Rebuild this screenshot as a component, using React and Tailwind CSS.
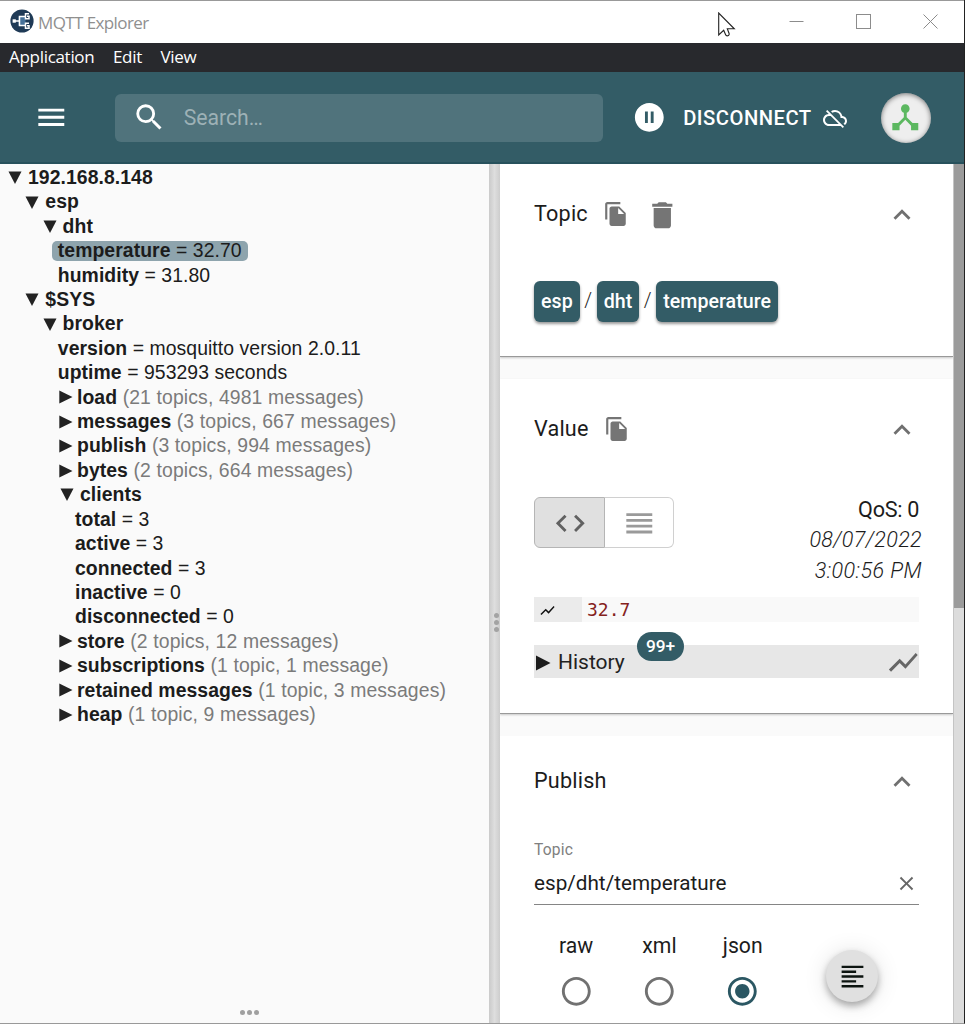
import React from 'react';
import {
  MdMenu,
  MdSearch,
  MdPauseCircleFilled,
  MdCloudOff,
  MdDeviceHub,
  MdFileCopy,
  MdDelete,
  MdExpandLess,
  MdCode,
  MdReorder,
  MdShowChart,
  MdClear,
  MdFormatAlignLeft,
  MdRadioButtonUnchecked,
  MdRadioButtonChecked,
} from 'react-icons/md';

const TREE = [
  { depth: 0, name: '192.168.8.148', state: 'open' },
  { depth: 1, name: 'esp', state: 'open' },
  { depth: 2, name: 'dht', state: 'open' },
  { depth: 3, name: 'temperature', value: '32.70', selected: true },
  { depth: 3, name: 'humidity', value: '31.80' },
  { depth: 1, name: '$SYS', state: 'open' },
  { depth: 2, name: 'broker', state: 'open' },
  { depth: 3, name: 'version', value: 'mosquitto version 2.0.11' },
  { depth: 3, name: 'uptime', value: '953293 seconds' },
  { depth: 3, name: 'load', state: 'closed', info: '(21 topics, 4981 messages)' },
  { depth: 3, name: 'messages', state: 'closed', info: '(3 topics, 667 messages)' },
  { depth: 3, name: 'publish', state: 'closed', info: '(3 topics, 994 messages)' },
  { depth: 3, name: 'bytes', state: 'closed', info: '(2 topics, 664 messages)' },
  { depth: 3, name: 'clients', state: 'open' },
  { depth: 4, name: 'total', value: '3' },
  { depth: 4, name: 'active', value: '3' },
  { depth: 4, name: 'connected', value: '3' },
  { depth: 4, name: 'inactive', value: '0' },
  { depth: 4, name: 'disconnected', value: '0' },
  { depth: 3, name: 'store', state: 'closed', info: '(2 topics, 12 messages)' },
  { depth: 3, name: 'subscriptions', state: 'closed', info: '(1 topic, 1 message)' },
  { depth: 3, name: 'retained messages', state: 'closed', info: '(1 topic, 3 messages)' },
  { depth: 3, name: 'heap', state: 'closed', info: '(1 topic, 9 messages)' },
];

const INDENT = ['pl-0', 'pl-[17.3px]', 'pl-[34.6px]', 'pl-[52px]', 'pl-[69.2px]'];

const FORMATS = ['raw', 'xml', 'json'];

const Logo = () => (
  <svg viewBox="0 0 24 24" className="-mt-[2px] w-6 h-6">
    <circle cx="12" cy="12" r="11.6" fill="#1f3a56" />
    <rect x="8.500" y="7.500" width="7" height="9" fill="#47729a" />
    <g fill="none" stroke="#fff" strokeWidth="1.5">
      <path d="M4 12h5M12.500 7.500h-3v9h3M11.500 7.500h4M11.500 16.500h4" />
      <path d="M19 4.800h-3.500v5h3.500v-2.500h-2M19 14.200h-3.500v5h3.500v-2.500h-2" />
    </g>
    <rect x="2.600" y="10.300" width="3.200" height="3.400" fill="#fff" />
  </svg>
);

const TitleBar = () => (
  <div className="relative flex items-center h-[43px] shrink-0 bg-white border-t border-[#999] pl-[10px]">
    <Logo />
    <span className="ml-[4px] font-['Open_Sans',sans-serif] text-[17px] leading-none tracking-[-0.600px] text-[#8f8f8f]">
      MQTT Explorer
    </span>
    <div className="ml-auto flex items-center gap-[52px] pr-[26px] pb-px">
      <svg viewBox="0 0 15 15" className="w-[15px] h-[15px]">
        <path d="M0.500 7.500h14" stroke="#8c8c8c" />
      </svg>
      <svg viewBox="0 0 15 15" className="w-[15px] h-[15px]">
        <rect x="0.500" y="0.500" width="14" height="14" fill="none" stroke="#8c8c8c" />
      </svg>
      <svg viewBox="0 0 15 15" className="w-[15px] h-[15px]">
        <path d="M0.500 0.500l14 14M14.500 0.500l-14 14" fill="none" stroke="#8c8c8c" />
      </svg>
    </div>
    {/* mouse pointer */}
    <svg viewBox="0 0 18 27" className="absolute left-[718px] top-[11px] w-[18px] h-[27px]">
      <path
        d="M0.700 1v22l5-4.700 1.800 4.200c.8 2.200 4.200 1.600 3.600-1l-1.800-4.700h7z"
        fill="#fff"
        stroke="#222"
        strokeWidth="1.100"
      />
    </svg>
  </div>
);

const MenuBar = () => (
  <div className="flex items-center gap-[18.500px] h-[29px] shrink-0 bg-[#28292d] pl-[9px] pb-[2px] font-['Open_Sans',sans-serif] text-[17px] leading-none tracking-[-0.300px] text-white">
    <span>Application</span>
    <span>Edit</span>
    <span>View</span>
  </div>
);

const AppBar = () => (
  <div className="flex items-center h-[91.500px] shrink-0 bg-[#335c66] border-b-2 border-[#27515c] pl-[34px] pt-[2px] text-white">
    <MdMenu className="w-[34.600px] h-[34.600px]" />
    <div className="flex items-center ml-[46.500px] w-[488px] h-12 rounded-md bg-[#50737c] pl-[17px]">
      <MdSearch className="w-[34.600px] h-[34.600px]" />
      <span className="ml-[17px] text-[21.200px] text-[#9db1b6]">Search…</span>
    </div>
    <MdPauseCircleFilled className="ml-[28.500px] w-[34.600px] h-[34.600px]" />
    <div className="ml-[17px] flex items-center font-medium text-[20.200px] tracking-[0.500px]">
      DISCONNECT
      <MdCloudOff className="ml-[11px] w-6 h-6" />
    </div>
    <div className="ml-[34px] flex items-center justify-center w-[50px] h-[50px] rounded-full bg-[#eee] shadow-[inset_0_1px_5px_rgba(0,0,0,0.5)]">
      <MdDeviceHub className="w-[34.600px] h-[34.600px] text-[#5cb860]" />
    </div>
  </div>
);

const Arrow = ({ state }) => {
  if (state === 'open') {
    return (
      <svg viewBox="0 0 14 13" className="ml-[8px] mr-[6px] w-[14px] h-[13px]">
        <path d="M0.500 0.500h13l-6.500 12.500z" fill="#222" />
      </svg>
    );
  }
  if (state === 'closed') {
    return (
      <svg viewBox="0 0 14 14" className="ml-[7px] mr-[4px] w-[14px] h-[14px]">
        <path d="M0.300 0.500v13l13.200-6.500z" fill="#222" />
      </svg>
    );
  }
  return <span className="w-[5.800px]" />;
};

const TreeNode = ({ node }) => (
  <div className={`flex items-center h-[24.420px] ${INDENT[node.depth]}`}>
    <div
      className={
        node.selected
          ? 'flex items-center h-[20px] rounded-[5px] bg-[#8ea4ad] pr-[6px]'
          : 'flex items-center h-[20px] pr-[6px]'
      }
    >
      <Arrow state={node.state} />
      <span className="whitespace-pre">
        <b>{node.name}</b>
        {node.value && ` = ${node.value}`}
        {node.info && <span className="text-[#7b7b7b] tracking-[0.120px]"> {node.info}</span>}
      </span>
    </div>
  </div>
);

const TopicTree = () => (
  <div className="flex flex-col w-[489px] bg-[#fafafa] pt-[2px] font-['Liberation_Sans',Arial,sans-serif] text-[19.400px] leading-none tracking-[0.060px] text-[#1c1c1c]">
    {TREE.map((node, i) => (
      <TreeNode key={i} node={node} />
    ))}
    <div className="mt-auto mb-[8px] ml-[240px] flex gap-[2px]">
      <span className="w-[5px] h-[5px] rounded-full bg-[#a0a0a0]" />
      <span className="w-[5px] h-[5px] rounded-full bg-[#a0a0a0]" />
      <span className="w-[5px] h-[5px] rounded-full bg-[#a0a0a0]" />
    </div>
  </div>
);

const Splitter = () => (
  <div className="flex flex-col items-center gap-[2px] w-[11px] pt-[449px] pl-[3px] bg-linear-to-r from-[#cacaca] via-[#dedede] to-[#cdcdcd]">
    <span className="w-[5px] h-[5px] rounded-full bg-[#a3a3a3]" />
    <span className="w-[5px] h-[5px] rounded-full bg-[#a3a3a3]" />
    <span className="w-[5px] h-[5px] rounded-full bg-[#a3a3a3]" />
  </div>
);

const PanelHeader = ({ title, children }) => (
  <div className="flex items-center h-[36px]">
    <span className="pb-[2px] text-[21.600px] leading-none tracking-[0.200px]">{title}</span>
    {children}
    <MdExpandLess className="ml-auto w-[34px] h-[34px] text-[#707070]" />
  </div>
);

const TopicChip = ({ children }) => (
  <span className="flex items-center h-[41px] px-[7px] pt-px rounded-[6px] bg-[#335c66] font-medium text-white tracking-[0.030px] shadow-[0_2px_3px_rgba(0,0,0,0.4)]">
    {children}
  </span>
);

const TopicPanel = () => (
  <div className="h-[193px] shrink-0 bg-white px-[34px] pt-[33px] border-b border-[#999] shadow-[0_1px_2px_rgba(0,0,0,0.2)]">
    <PanelHeader title="Topic">
      <MdFileCopy className="ml-[15px] -mt-[2px] w-[26px] h-[26px] text-[#757575]" />
      <MdDelete className="ml-[16px] mt-[2px] w-[34.600px] h-[34.600px] text-[#757575]" />
    </PanelHeader>
    <div className="flex items-center mt-[48px] text-[19.600px] leading-none">
      <TopicChip>esp</TopicChip>
      <span className="w-[17px] text-center font-light">/</span>
      <TopicChip>dht</TopicChip>
      <span className="w-[17px] text-center font-light">/</span>
      <TopicChip>temperature</TopicChip>
    </div>
  </div>
);

const ValuePanel = () => (
  <div className="mt-[22px] h-[335px] shrink-0 bg-white px-[34px] pt-[33px] border-b border-[#999] shadow-[0_1px_2px_rgba(0,0,0,0.2)]">
    <PanelHeader title="Value">
      <MdFileCopy className="ml-[15px] -mt-[2px] w-[26px] h-[26px] text-[#757575]" />
    </PanelHeader>
    <div className="flex justify-between mt-[49px] h-[100px]">
      <div className="flex h-[51px]">
        <div className="flex items-center justify-center w-[71px] rounded-l-[6px] border border-[#b5b5b5] bg-[#e0e0e0] pl-[2px] pt-[2px]">
          <MdCode className="w-[34.600px] h-[34.600px] text-[#616161]" />
        </div>
        <div className="flex items-center justify-center w-[69px] rounded-r-[6px] border border-l-0 border-[#d0d0d0] pt-[2px]">
          <MdReorder className="w-[34.600px] h-[34.600px] text-[#9a9a9a]" />
        </div>
      </div>
      <div className="text-right text-[21.600px] leading-[30.500px] -mt-[2px]">
        <div className="tracking-[-0.300px]">QoS: 0</div>
        <div className="italic font-light tracking-[0.300px] -mr-[3px]">08/07/2022</div>
        <div className="italic font-light tracking-[0.400px] -mr-[3px]">3:00:56 PM</div>
      </div>
    </div>
    <div className="flex items-center h-[25px] bg-[#f9f9f9]">
      <div className="flex items-center w-[48px] h-full bg-[#ebebeb] pl-[5px] pt-[2px]">
        <MdShowChart className="w-[17px] h-[17px] text-[#111]" />
      </div>
      <span className="ml-[5px] pt-[2px] font-['DejaVu_Sans_Mono',monospace] text-[18px] leading-none text-[#85221d]">
        32.7
      </span>
    </div>
    <div className="relative flex items-center mt-[23px] h-[33px] bg-[#e7e7e7] text-[#222]">
      <svg viewBox="0 0 15 16" className="ml-[2px] mt-[3px] w-[15px] h-[16px]">
        <path d="M0 0.500v15l14.500-7.500z" fill="#1c1c1c" />
      </svg>
      <span className="ml-[7px] pt-[3px] text-[21px] leading-none">History</span>
      <span className="absolute left-[103px] -top-[13px] flex items-center justify-center w-[47px] h-[29px] rounded-full bg-[#335c66] pt-px font-medium text-[17.300px] text-white">
        99+
      </span>
      <MdShowChart className="ml-auto -mr-[2px] mt-[2px] w-[34.600px] h-[34.600px] text-[#666]" />
    </div>
  </div>
);

const PublishPanel = () => (
  <div className="mt-[22px] grow bg-white px-[34px] pt-[28px]">
    <PanelHeader title="Publish" />
    <div className="mt-[42px] text-[15.600px] leading-[16px] tracking-[0.200px] text-[#808080]">Topic</div>
    <div className="flex items-center justify-between mt-[9px] h-[38px] border-b border-[#858585] pb-[4px]">
      <span className="text-[20.700px] leading-none">esp/dht/temperature</span>
      <MdClear className="mr-[1px] w-[23px] h-[23px] text-[#666]" />
    </div>
    <div className="flex mt-[25px]">
      {FORMATS.map((format) => (
        <div key={format} className="flex flex-col items-center w-[83.300px] pl-px text-[21.200px] leading-[32px]">
          <span>{format}</span>
          {format === 'json' ? (
            <MdRadioButtonChecked className="mt-[12px] w-[34.600px] h-[34.600px] text-[#2b5763]" />
          ) : (
            <MdRadioButtonUnchecked className="mt-[12px] w-[34.600px] h-[34.600px] text-[#717171]" />
          )}
        </div>
      ))}
      <div className="ml-auto mr-[41px] mt-[20px] flex items-center justify-center w-[52px] h-[52px] rounded-full bg-[#e0e0e0] pt-px shadow-[0_4px_7px_rgba(0,0,0,0.3),0_2px_24px_rgba(0,0,0,0.12)]">
        <MdFormatAlignLeft className="w-[29px] h-[29px] text-[#0c1410]" />
      </div>
    </div>
  </div>
);

const Scrollbar = () => (
  <div className="w-[11px] bg-[#dcdcdc] border-l border-[#c4c4c4]">
    <div className="h-[444px] bg-[#9b9b9b]" />
  </div>
);

export default function App() {
  return (
    <div className="flex flex-col w-[965px] h-[1024px] overflow-hidden border-r border-[#222] border-b border-b-[#999] bg-[#fafafa] font-[Roboto,sans-serif] text-[#1c1c1c]">
      <TitleBar />
      <MenuBar />
      <AppBar />
      <div className="flex grow min-h-0">
        <TopicTree />
        <Splitter />
        <div className="flex flex-col grow overflow-hidden">
          <TopicPanel />
          <ValuePanel />
          <PublishPanel />
        </div>
        <Scrollbar />
      </div>
    </div>
  );
}
